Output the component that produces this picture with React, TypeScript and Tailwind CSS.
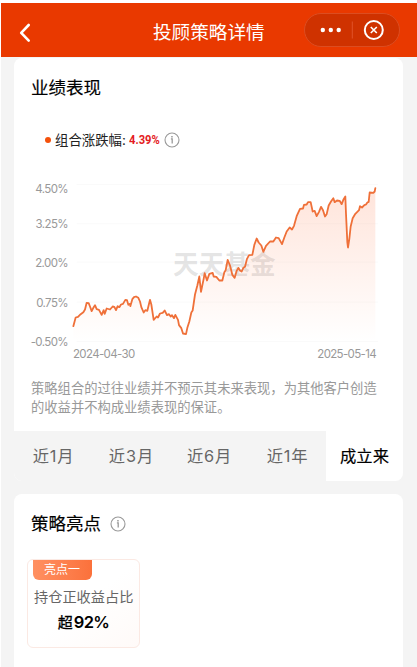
import React from "react";

type Point = [number, number];

const startOfYear: Point[] = [
  [10,467],[17,441],[24,439],[32,431],[40,425],[45,417],[50,397],[56,398],[60,408],[65,422],[70,412],[75,404],[80,416],[87,418],[95,433],[101,419],[104,430],[110,414],[120,417],[128,408],[133,409],[138,419],[143,407],[148,410],[153,402],[159,400],[166,388],[171,389],[175,403],[180,400],[181,407],[187,386],[192,380],[198,378],[205,382],[210,393],[214,410],[221,426],[226,419],[232,421],[240,388],[244,402],[251,448],[260,438],[264,441],[270,429],[278,427],[284,420],[291,434],[297,431],[302,438],[306,434],[312,443],[316,433],[324,448],[327,464],[334,473],[339,489],[348,491],[352,472],[358,453],[364,426],
];
const middle: Point[] = [
  [368,420],[375,372],[382,345],[388,318],[393,364],[401,325],[404,308],[411,330],[418,310],[428,307],[431,318],[439,319],[448,330],[457,330],[463,305],[467,299],[473,268],[480,285],[487,313],[494,322],[500,301],[505,292],[510,300],[515,303],[520,292],[525,289],[531,265],[537,254],[547,253],[553,223],[560,204],[566,216],[574,225],[580,244],[588,226],
];
const recent: Point[] = [
  [600,213],[610,213],[618,201],[626,203],[636,221],[643,201],[650,183],[659,171],[666,177],[672,166],[680,137],[690,115],[699,114],[702,103],[710,102],[714,95],[722,95],[728,123],[734,121],[740,137],[747,124],[753,109],[759,119],[765,138],[770,131],[776,105],[783,93],[790,83],[794,95],[801,90],[809,91],[815,101],[820,88],[826,78],[828,130],[832,215],[834,231],[838,205],[842,168],[848,143],[856,130],[867,119],[870,107],[876,111],[883,104],[888,102],[892,96],[896,94],[899,66],[910,67],[914,63],[916,53],
];
const series = [...startOfYear, ...middle, ...recent];
const line = series.map((p) => p.join(",")).join(" ");
const area = `10,513 ${line} 916,513`;

function InfoIcon({ className }: { className: string }) {
  return (
    <svg className={className} viewBox="0 0 16 16" fill="none" stroke="#999" strokeWidth="1.1">
      <circle cx="8" cy="8" r="7" />
      <path d="M6.9 6.9h1.3v4.5" strokeWidth="1.3" />
      <path d="M7.2 4.7h1.5" strokeWidth="1.6" />
    </svg>
  );
}

function Header() {
  return (
    <header className="flex h-[54px] items-center bg-[#e93900] text-white">
      <svg className="ml-[18px] mt-[6px] h-5 w-3" viewBox="0 0 12 20" fill="none" stroke="white" strokeWidth="2.6" strokeLinecap="round" strokeLinejoin="round">
        <path d="M9.7 2 2.2 9.8l7.5 7.8" />
      </svg>
      <h1 className="ml-[122px] mt-[4px] w-[120px] whitespace-nowrap text-[18.6px] leading-6">投顾策略详情</h1>
      <div className="ml-[31px] flex h-[34px] w-[96px] items-center rounded-full border border-[#dc4d21] bg-[#cf3200]">
        <svg className="h-8 w-[94px]" viewBox="0 0 94 32" fill="none">
          <g fill="white">
            <circle cx="17.8" cy="16" r="2.2" />
            <circle cx="25.8" cy="16" r="2.2" />
            <circle cx="33.7" cy="16" r="2.2" />
          </g>
          <path d="M47.3 7.5v17" stroke="#e05229" />
          <circle cx="68.8" cy="16" r="9" stroke="white" strokeWidth="2" />
          <path d="m65.8 13 6 6m0-6-6 6" stroke="white" strokeWidth="1.6" />
        </svg>
      </div>
    </header>
  );
}

function Chart() {
  return (
    <div className="mt-[30px] flex h-[183px]">
      <div className="flex w-[54px] flex-col items-end text-[11.5px] leading-4 tracking-[-0.6px] text-[#999]">
        <span className="mt-[1px]">4.50%</span>
        <span className="mt-[19px]">3.25%</span>
        <span className="mt-[23px]">2.00%</span>
        <span className="mt-[24px]">0.75%</span>
        <span className="mt-[23px]">-0.50%</span>
      </div>
      <div className="ml-[2px] w-[314px]">
        <svg className="mt-px h-[165px] w-[314px]" viewBox="0 31.5 942 495" fill="none">
          <defs>
            <linearGradient id="fade" x1="0" y1="53" x2="0" y2="513" gradientUnits="userSpaceOnUse">
              <stop offset="0" stopColor="#ff6a35" stopOpacity=".18" />
              <stop offset=".45" stopColor="#ff6a35" stopOpacity=".1" />
              <stop offset="1" stopColor="#ff6a35" stopOpacity="0" />
            </linearGradient>
          </defs>
          <path d="M20 42H924M20 160H924M20 275H924M20 395H924M20 513H924" stroke="#fafafa" strokeWidth="3" />
          <text x="309" y="310" fontSize="77" fontWeight="700" fill="#777" fillOpacity=".2">天天基金</text>
          <polygon points={area} fill="url(#fade)" />
          <polyline points={line} stroke="#ef7039" strokeWidth="5.4" strokeLinejoin="round" strokeLinecap="round" />
        </svg>
        <div className="flex w-[306px] justify-between pl-[3px] text-[11.5px] leading-4 tracking-[-0.65px] text-[#999]">
          <span>2024-04-30</span>
          <span>2025-05-14</span>
        </div>
      </div>
    </div>
  );
}

function Performance() {
  return (
    <section className="mx-[13px] h-[423px] w-[389px] overflow-hidden rounded-lg bg-white">
      <h2 className="ml-[17px] pt-[17px] text-[17.5px] leading-[26px] text-black [-webkit-text-stroke:0.15px_black]">业绩表现</h2>
      <div className="ml-[31px] mt-[29px] flex h-5 items-center text-[13.4px] text-[#222]">
        <i className="mr-[4px] size-[6px] rounded-full bg-[#f4510b]" />
        <span className="w-[74px] whitespace-nowrap">组合涨跌幅:</span>
        <b className="w-[31px] origin-left scale-x-[0.86] whitespace-nowrap text-[13px] font-bold text-[#e41c23] [font-family:Roboto,sans-serif]">4.39%</b>
        <InfoIcon className="ml-[4px] size-4" />
      </div>
      <Chart />
      <p className="ml-[17px] mt-[16px] whitespace-nowrap text-[13.3px] leading-[19px] text-[#999]">
        策略组合的过往业绩并不预示其未来表现，为其他客户创造<br />的收益并不构成业绩表现的保证。
      </p>
      <nav className="mt-[14px] flex h-[50px] bg-[#f4f4f4] text-[16.3px] leading-[50px] text-[#666]">
        <span className="w-[78px] pl-px text-center tracking-[0.7px]">近1月</span>
        <span className="w-[78px] pl-px text-center tracking-[0.9px]">近3月</span>
        <span className="w-[78px] pl-px text-center tracking-[0.7px]">近6月</span>
        <span className="w-[78px] pl-px text-center tracking-[0.7px]">近1年</span>
        <span className="w-[77px] bg-white text-center text-black [-webkit-text-stroke:0.15px_black]">成立来</span>
      </nav>
    </section>
  );
}

function Highlights() {
  return (
    <section className="mx-[13px] mt-[13px] h-[173px] w-[389px] rounded-t-lg bg-white">
      <div className="flex items-center pl-[17px] pt-[17px]">
        <h2 className="text-[17.5px] leading-[26px] text-black [-webkit-text-stroke:0.15px_black]">策略亮点</h2>
        <InfoIcon className="ml-[9px] size-4" />
      </div>
      <div className="ml-[13px] mt-[22px] h-[89px] w-[113px] overflow-hidden rounded-md border border-[#fbe9e3] bg-linear-to-br from-white via-white to-[#fffaf8]">
        <div className="ml-[5px] h-[20px] w-[59px] rounded-b-md bg-linear-to-r from-[#ff9061] to-[#fb713b] pl-[11px] text-[12px] leading-[19px] text-white">亮点一</div>
        <p className="ml-[6px] mt-[7px] whitespace-nowrap text-[14.2px] leading-5 text-[#666]">持仓正收益占比</p>
        <p className="mt-[3px] text-center text-[15px] leading-6 text-black"><span className="[-webkit-text-stroke:0.3px_black]">超</span><span className="ml-px text-[16.5px] font-semibold tracking-[-0.6px]">92%</span></p>
      </div>
    </section>
  );
}

export default function App() {
  return (
    <div className="h-[667px] w-[417px] overflow-hidden bg-white pl-px pt-[3px] [font-family:Inter,'Noto_Sans_CJK_SC',sans-serif]">
      <div className="h-[664px] bg-[#f4f4f4]">
        <Header />
        <div className="pt-px">
          <Performance />
          <Highlights />
        </div>
      </div>
    </div>
  );
}
